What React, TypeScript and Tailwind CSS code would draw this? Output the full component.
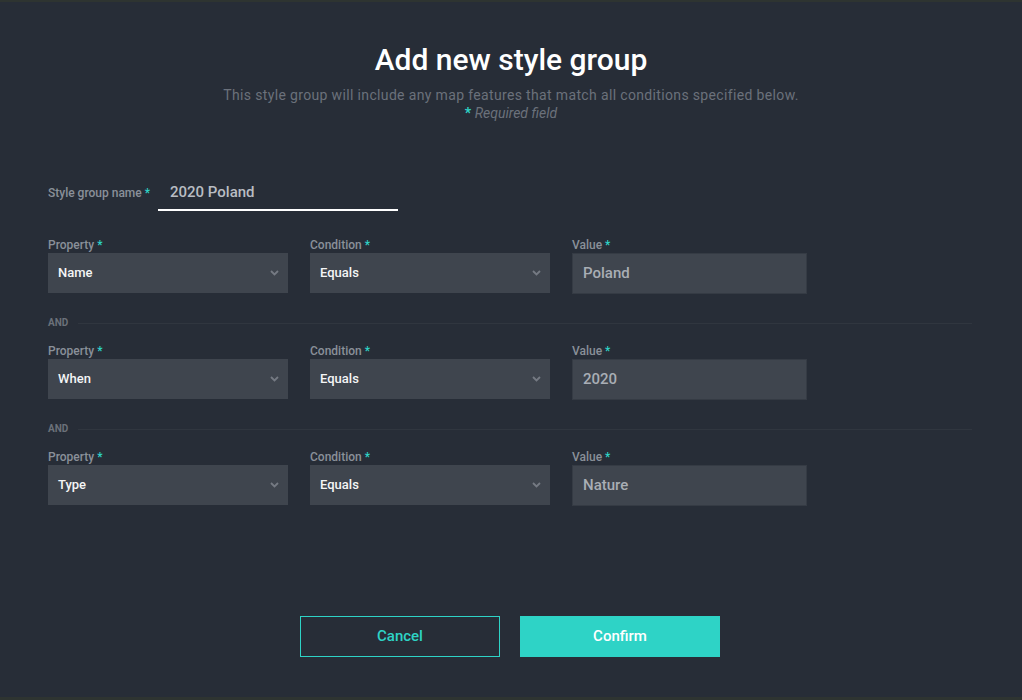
import React from 'react';

const rows = [
  { property: 'Name', condition: 'Equals', value: 'Poland' },
  { property: 'When', condition: 'Equals', value: '2020' },
  { property: 'Type', condition: 'Equals', value: 'Nature' },
];

const Req = () => <span className="text-[#2ed3c6] ml-[3px]">*</span>;

const Label = ({ children }: { children: React.ReactNode }) => (
  <div className="h-[16px] text-[12px] leading-[16px] font-medium text-[#8a9099]">
    {children}
    <Req />
  </div>
);

const Chevron = () => (
  <svg width="9" height="6" viewBox="0 0 9 6" className="text-[#757a83]">
    <path d="M1 1l3.5 3.5L8 1" fill="none" stroke="currentColor" strokeWidth="1.8" />
  </svg>
);

const Select = ({ text }: { text: string }) => (
  <div className="h-[40px] bg-[#3f454e] flex items-center justify-between pl-[10px] pr-[9px]">
    <span className="text-[13px] font-medium text-[#f4f5f6]">{text}</span>
    <Chevron />
  </div>
);

const App = () => {
  return (
    <div className="h-[700px] bg-[#272d37] border-t-2 border-b-[3px] border-[#2e3431] font-['Roboto',sans-serif] flex flex-col">
      <div className="flex flex-col items-center pt-[39px]">
        <h1 className="text-[30px] leading-[38px] font-medium text-white">Add new style group</h1>
        <p className="mt-[7px] text-[14px] leading-[18px] tracking-[0.35px] text-[#6b717b]">
          This style group will include any map features that match all conditions specified below.
        </p>
        <p className="text-[14px] leading-[18px] italic text-[#6b717b]">
          <span className="text-[#2ed3c6] not-italic font-bold">*</span> Required field
        </p>
      </div>

      <div className="px-12 mt-[53px]">
        <div className="flex items-end">
          <div className="w-[110px] h-[36px] flex items-center text-[12px] font-medium text-[#8a9099]">
            Style group name<Req />
          </div>
          <div className="w-[240px] h-[36px] border-b-2 border-white flex items-center pl-[12px] text-[15px] font-medium text-[#b9bdc3]">
            2020 Poland
          </div>
        </div>

        <div className="mt-[26px] flex flex-col">
          {rows.map((r, i) => (
            <div key={i}>
              {i > 0 && (
                <div className="flex items-center gap-[10px] mt-[22px] mb-[13px] pr-[2px]">
                  <span className="text-[10px] leading-[14px] font-bold text-[#6b717a]">AND</span>
                  <div className="flex-1 h-px bg-[#30363f]" />
                </div>
              )}
              <div className="flex gap-[22px]">
                <div className="w-[240px]">
                  <Label>Property</Label>
                  <Select text={r.property} />
                </div>
                <div className="w-[240px]">
                  <Label>Condition</Label>
                  <Select text={r.condition} />
                </div>
                <div className="w-[235px]">
                  <Label>Value</Label>
                  <div className="h-[41px] bg-[#3f454e] border border-[#353b44] flex items-center pl-[10px] text-[15px] font-medium text-[#a9aeb5]">
                    {r.value}
                  </div>
                </div>
              </div>
            </div>
          ))}
        </div>
      </div>

      <div className="mt-auto mb-[40px] pr-[2px] flex justify-center gap-[20px]">
        <button className="w-[200px] h-[41px] border border-[#2ed3c6] text-[#2ed3c6] text-[15px] font-medium">
          Cancel
        </button>
        <button className="w-[200px] h-[41px] bg-[#2ed3c6] text-white text-[15px] font-medium">
          Confirm
        </button>
      </div>
    </div>
  );
};

export default App;
